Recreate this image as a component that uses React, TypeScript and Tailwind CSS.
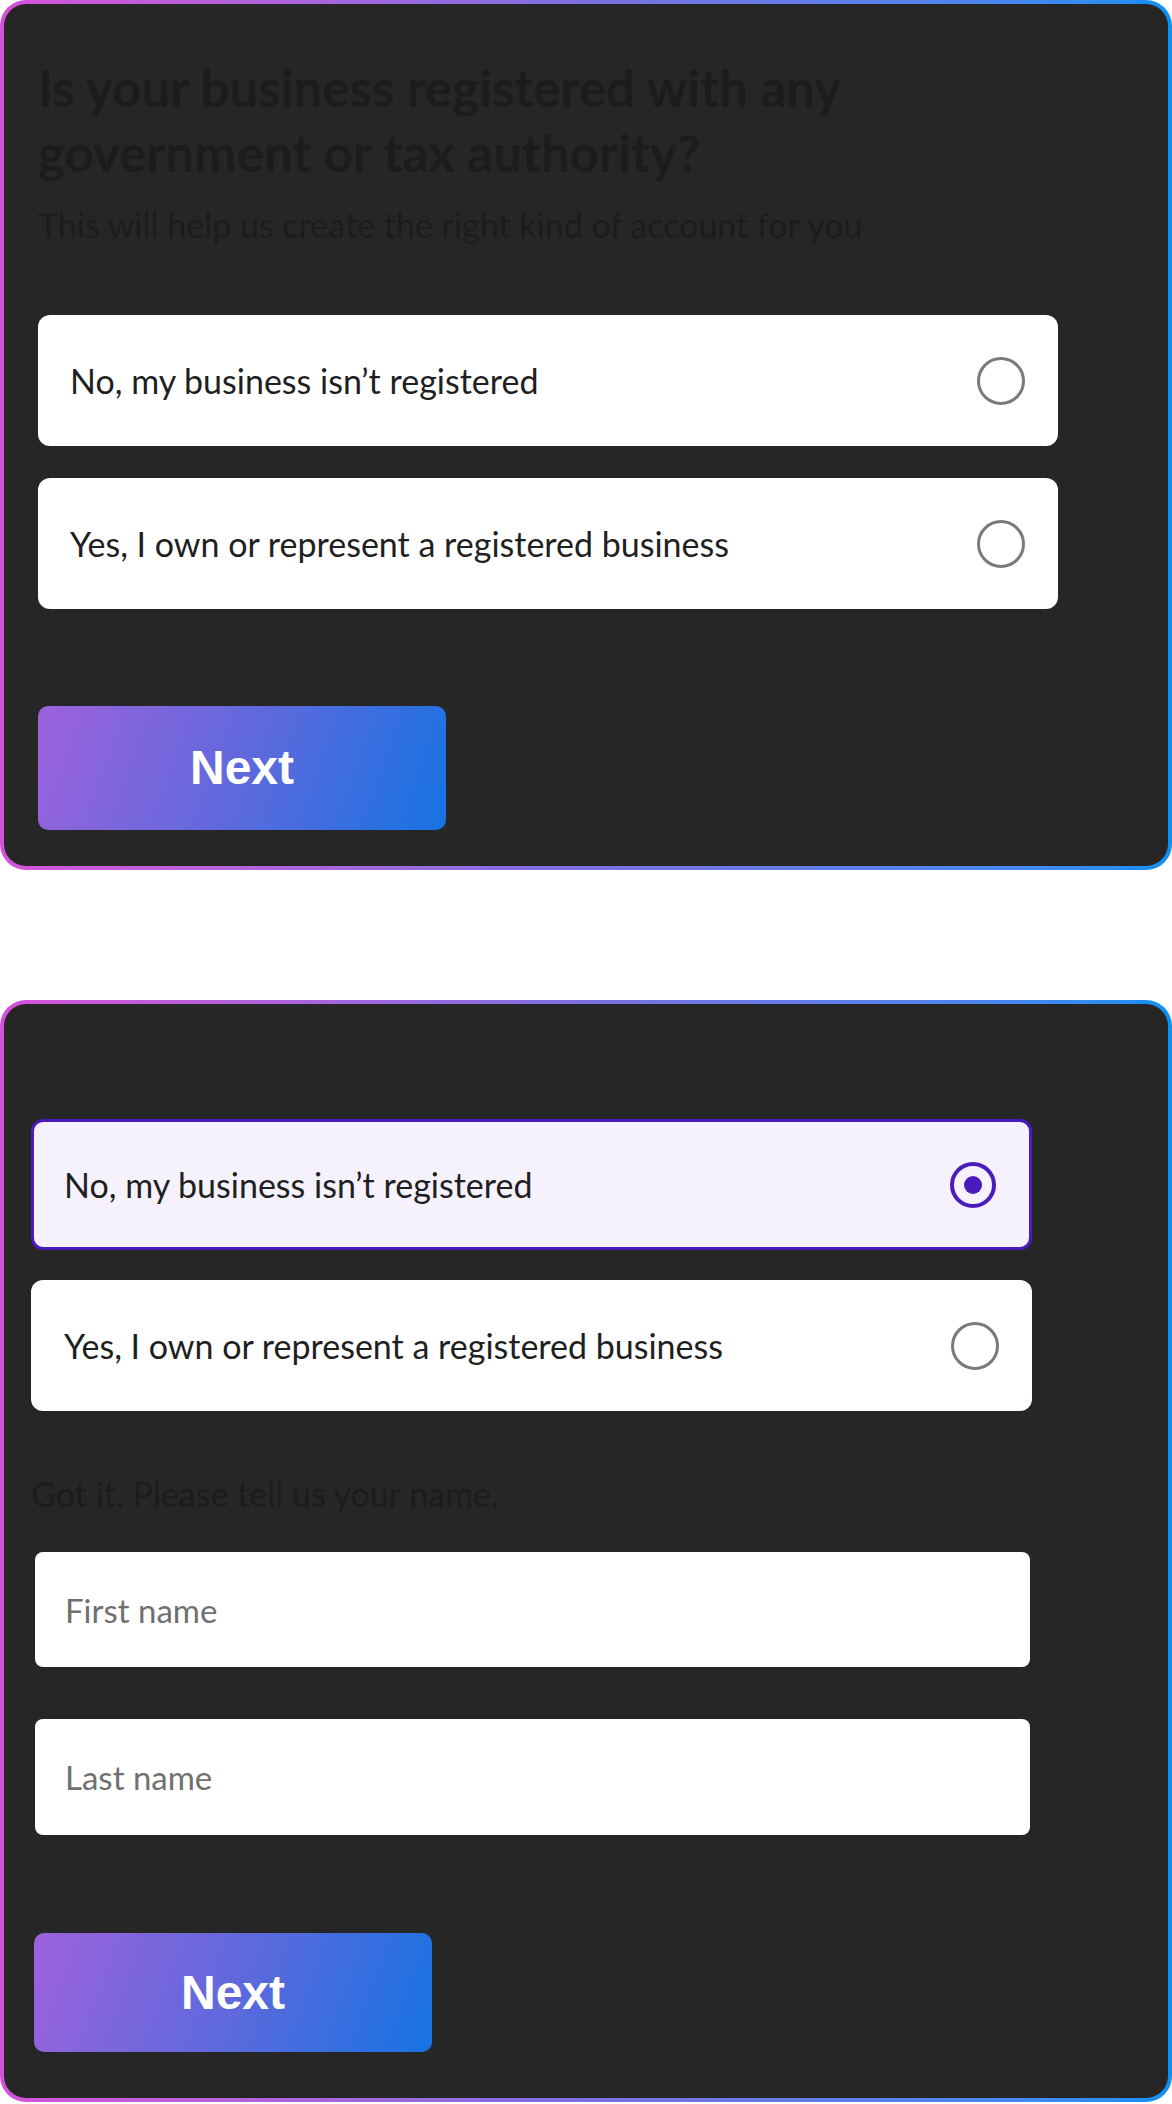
import { useState } from 'react';

type Choice = 'no' | 'yes' | null;

const options = [
  { id: 'no' as const, label: 'No, my business isn’t registered' },
  { id: 'yes' as const, label: 'Yes, I own or represent a registered business' },
];

const Radio = ({ checked }: { checked: boolean }) =>
  checked ? (
    <span className="flex h-[46px] w-[46px] shrink-0 items-center justify-center rounded-full border-[4px] border-[#4a1cbd]">
      <span className="h-[18px] w-[18px] rounded-full bg-[#4a1cbd]" />
    </span>
  ) : (
    <span className="h-[48px] w-[48px] shrink-0 rounded-full border-[3px] border-[#7a7a7a]" />
  );

const NextButton = ({ className }: { className: string }) => (
  <button
    type="button"
    className={`rounded-[10px] bg-linear-[110deg,#9d62dd_0%,#5f69dc_50%,#1673e3_100%] font-['Liberation_Sans',Arial,sans-serif] text-[48px] font-bold text-white ${className}`}
  >
    Next
  </button>
);

const Frame = ({ children, className }: { children: React.ReactNode; className: string }) => (
  <div className={`rounded-[26px] bg-gradient-to-r from-[#d651d9] via-[#7b6fe2] to-[#0a90f3] p-[4px] ${className}`}>
    <div className="rounded-[22px] bg-[#262626]">{children}</div>
  </div>
);

export default function App() {
  const [choice, setChoice] = useState<Choice>('no');

  return (
    <div className="min-h-[2104px] w-[1172px] bg-white font-['Lato',sans-serif]">
      {/* Step 1: question, nothing chosen */}
      <Frame className="h-[870px]">
        <div className="flex h-[862px] flex-col pl-[34px] pr-[110px] pt-[51px]">
          <h1 className="max-w-[900px] text-[51px] font-bold leading-[65px] text-[#1c1c1c]">
            Is your business registered with any government or tax authority?
          </h1>
          <p className="mt-[20px] whitespace-nowrap text-[34px] leading-[40px] text-[#1c1c1c]">
            This will help us create the right kind of account for you
          </p>

          <div className="mt-[70px] flex flex-col gap-[32px]">
            {options.map((o) => (
              <div
                key={o.id}
                className="flex h-[131px] items-center justify-between rounded-[12px] bg-white pl-[32px] pr-[33px]"
              >
                <span className="text-[34px] text-[#1f1f1f]">{o.label}</span>
                <Radio checked={false} />
              </div>
            ))}
          </div>

          <NextButton className="mt-[97px] h-[124px] w-[408px]" />
        </div>
      </Frame>

      {/* Step 2: answered, asking for name */}
      <Frame className="mt-[130px] h-[1102px]">
        <div className="flex h-[1094px] flex-col pl-[27px] pr-[136px] pt-[115px]">
          <div className="flex flex-col gap-[30px]">
            {options.map((o) => {
              const active = choice === o.id;
              return (
                <div
                  key={o.id}
                  onClick={() => setChoice(o.id)}
                  className={`flex h-[131px] cursor-pointer items-center justify-between rounded-[12px] pr-[33px] ${
                    active ? 'border-[3px] border-[#4a1cbd] bg-[#f5f2fe] pl-[30px]' : 'bg-white pl-[33px]'
                  }`}
                >
                  <span className="text-[34px] text-[#1f1f1f]">{o.label}</span>
                  <Radio checked={active} />
                </div>
              );
            })}
          </div>

          <p className="mt-[63px] text-[34px] leading-[40px] text-[#1c1c1c]">Got it. Please tell us your name.</p>

          <div className="mt-[38px] flex flex-col gap-[52px] pl-[4px] pr-[2px]">
            <input
              placeholder="First name"
              className="h-[115px] rounded-[8px] bg-white px-[30px] text-[33px] text-[#222] outline-none placeholder:text-[#707070]"
            />
            <input
              placeholder="Last name"
              className="h-[116px] rounded-[8px] bg-white px-[30px] text-[33px] text-[#222] outline-none placeholder:text-[#707070]"
            />
          </div>

          <NextButton className="ml-[3px] mt-[98px] h-[119px] w-[398px]" />
        </div>
      </Frame>
    </div>
  );
}
